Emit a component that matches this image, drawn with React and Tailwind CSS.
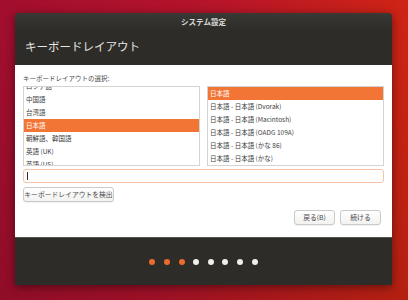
const leftItems = ["ロシア語", "中国語", "台湾語", "日本語", "朝鮮語、韓国語", "英語 (UK)", "英語 (US)"];
const rightItems = [
  "日本語",
  "日本語 - 日本語 (Dvorak)",
  "日本語 - 日本語 (Macintosh)",
  "日本語 - 日本語 (OADG 109A)",
  "日本語 - 日本語 (かな 86)",
  "日本語 - 日本語 (かな)",
];

function ListBox({ items, selected, offset, className }) {
  return (
    <div className={`h-[80px] border border-[#d3d3d1] bg-white overflow-hidden ${className}`}>
      <div className={offset}>
        {items.map((item) => (
          <div
            key={item}
            className={`h-[13px] leading-[13px] px-[2px] text-[6.5px] whitespace-nowrap ${
              item === selected ? "bg-[#f27536] text-white" : "text-[#3c3c3c]"
            }`}
          >
            {item}
          </div>
        ))}
      </div>
    </div>
  );
}

function Button({ children, className }) {
  return (
    <div
      className={`h-[15px] flex items-center justify-center whitespace-nowrap rounded-[3px] border border-[#cacac8] bg-gradient-to-b from-white to-[#f2f2f1] text-[6.8px] text-[#4a4a4a] shadow-[0_1px_0_rgba(0,0,0,0.05)] ${className}`}
    >
      {children}
    </div>
  );
}

export default function App() {
  const dots = [true, true, true, false, false, false, false, false];

  return (
    <div
      className="w-[408px] h-[300px] overflow-hidden pt-[13px] pl-[15px] bg-[linear-gradient(to_bottom,rgba(0,0,0,0)_0%,rgba(50,0,20,0.2)_100%),linear-gradient(100deg,#a20e2e_0%,#b5142a_45%,#d4280f_100%)]"
      style={{ fontFamily: '"Noto Sans CJK JP", "Noto Sans", sans-serif' }}
    >
      <div className="w-[377px] h-[272px] flex flex-col rounded-t-[4px] overflow-hidden shadow-[0_2px_10px_rgba(0,0,0,0.45)]">
        {/* ヘッダー */}
        <div className="h-[52px] bg-[#2d2c28] flex flex-col">
          <div className="h-[17px] flex items-center justify-center bg-gradient-to-b from-[#393834] to-[#2d2c28] text-[7.5px] font-bold text-[#dcdcd8]">
            システム設定
          </div>
          <div className="flex-1 flex items-center pl-[10px] pb-[2px] text-[11.5px] text-[#e6e6e2]">
            キーボードレイアウト
          </div>
        </div>

        {/* 本体 */}
        <div className="h-[172px] bg-white flex flex-col pl-[8px] pr-[8px]">
          <div className="mt-[9px] h-[8px] leading-[8px] text-[6.5px] text-[#4a4a4a]">
            キーボードレイアウトの選択:
          </div>
          <div className="mt-[4px] flex gap-[7px]">
            <ListBox items={leftItems} selected="日本語" offset="-mt-[7px]" className="w-[177px]" />
            <ListBox items={rightItems} selected="日本語" offset="" className="flex-1" />
          </div>
          <div className="mt-[3px] h-[14px] rounded-[3px] border border-[#f4c3aa] flex items-center pl-[3px]">
            <div className="w-px h-[8px] bg-[#333]" />
          </div>
          <div className="mt-[4px]">
            <Button className="w-[91px]">キーボードレイアウトを検出</Button>
          </div>
          <div className="mt-[8px] flex justify-end gap-[5px] pr-[3px]">
            <Button className="w-[41px]">戻る(B)</Button>
            <Button className="w-[41px]">続ける</Button>
          </div>
        </div>

        {/* フッター */}
        <div className="flex-1 bg-[#2d2c28] border-t border-[#55544f] flex items-center justify-center gap-[8.6px]">
          {dots.map((on, i) => (
            <div
              key={i}
              className={`w-[6px] h-[6px] rounded-full ${on ? "bg-[#ec6a2e]" : "bg-[#efefed]"}`}
            />
          ))}
        </div>
      </div>
    </div>
  );
}
